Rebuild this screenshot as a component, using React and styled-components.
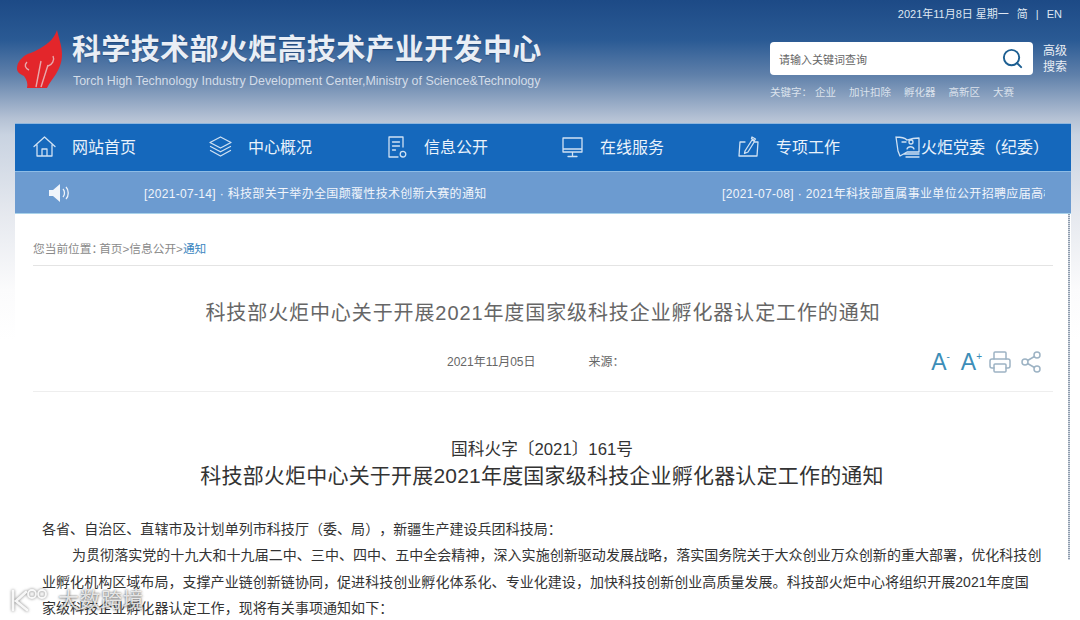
import React from 'react'
import styled, { createGlobalStyle } from 'styled-components'
import { Printer, Share2, Search } from 'lucide-react'

const Global = createGlobalStyle`
  html, body {
    margin: 0;
    padding: 0;
    background: #fff;
  }
  body {
    font-family: "Liberation Sans", "Noto Sans CJK SC", sans-serif;
    text-spacing-trim: space-all;
    overflow: hidden;
  }
`

const Page = styled.div`
  position: relative;
  width: 1080px;
  height: 620px;
  overflow: hidden;
  background: linear-gradient(180deg, #1d4a86 0, #2a5a94 40px, #5f80aa 75px, #b4c1d4 118px, #c9d3e1 135px, #e6e9ef 215px, #fbfbfc 290px, #fff 340px);
`

const Header = styled.header`
  height: 123px;
  display: flex;
  justify-content: space-between;
  padding: 0 11px 0 15px;
  box-sizing: border-box;
`

const Brand = styled.div`
  display: flex;
  align-items: flex-start;
  padding-top: 29px;
  gap: 10px;
`

const BrandText = styled.div`
  display: flex;
  flex-direction: column;
  padding-top: 4px;
`

const BrandName = styled.h1`
  margin: 0;
  font-size: 29px;
  line-height: 34px;
  font-weight: 700;
  letter-spacing: 0.35px;
  color: #e9eef5;
  white-space: nowrap;
  text-shadow: 0 1px 1px rgba(20, 50, 90, 0.45);
`

const BrandSub = styled.div`
  margin-top: 6px;
  padding-left: 1px;
  font-size: 12.4px;
  line-height: 16px;
  color: #d3dce8;
  white-space: nowrap;
`

const Tools = styled.div`
  width: 299px;
  display: flex;
  flex-direction: column;
`

const TopLine = styled.div`
  height: 30px;
  padding-top: 7px;
  box-sizing: border-box;
  display: flex;
  justify-content: flex-end;
  gap: 8px;
  font-size: 11px;
  line-height: 15px;
  color: #dfe7f2;
  margin-right: 7px;
  white-space: nowrap;
`

const SearchRow = styled.div`
  margin-top: 12px;
  display: flex;
  align-items: center;
  gap: 10px;
`

const SearchBox = styled.div`
  width: 264px;
  height: 33px;
  box-sizing: border-box;
  padding: 0 9px;
  background: #fff;
  border-radius: 4px;
  display: flex;
  align-items: center;
  justify-content: space-between;
  font-size: 11px;
  color: #666;
`

const SearchIcon = styled(Search)`
  color: #1d5f92;
`

const Advanced = styled.div`
  width: 26px;
  font-size: 12px;
  line-height: 16px;
  color: #e8edf4;
`

const Keywords = styled.div`
  margin-top: 9px;
  display: flex;
  font-size: 10.5px;
  line-height: 16px;
  color: #dbe2ec;
  gap: 13px;
`

const KeyLabel = styled.span`
  margin-right: -10px;
`

const Nav = styled.nav`
  margin: 0 9px 0 15px;
  height: 49px;
  box-sizing: border-box;
  background: #1568bc;
  border-top: 1px solid #8fb6dd;
  border-bottom: 1px solid #8dbce6;
  display: grid;
  grid-template-columns: repeat(6, 176px);
`

const NavItem = styled.a`
  display: flex;
  align-items: center;
  padding-left: ${({ $compact }) => ($compact ? '0' : '17px')};
  padding-bottom: 3px;
  gap: ${({ $compact }) => ($compact ? '1px' : '15px')};
  font-size: 16px;
  color: #eaf2fb;
  white-space: nowrap;
`

const NavIcon = styled.svg`
  width: 25px;
  height: 25px;
  flex: none;
  fill: none;
  stroke: #cfe1f3;
  stroke-width: 1.3;
  stroke-linecap: round;
  stroke-linejoin: round;
`

const Ticker = styled.div`
  margin: 0 9px 0 15px;
  height: 42px;
  box-sizing: border-box;
  background: #6c9bd0;
  border-bottom: 1px solid #a9d2ea;
  display: flex;
  align-items: center;
  padding-left: 33px;
  font-size: 12px;
  letter-spacing: 0.33px;
  color: #f1f5fb;
  white-space: nowrap;
`

const Speaker = styled.svg`
  width: 22px;
  height: 22px;
  flex: none;
  margin-right: 74px;
`

const TickerItem = styled.div`
  flex: 0 0 ${({ $width }) => $width}px;
  overflow: hidden;
`

const Panel = styled.main`
  position: relative;
  margin: 0 9px 0 15px;
  height: 406px;
  padding: 0 18px;
  box-sizing: border-box;
  background: #fff;
`

const ScrollEdge = styled.div`
  position: absolute;
  top: 0;
  right: 1px;
  width: 2px;
  height: 346px;
  background: repeating-linear-gradient(180deg, #8e9cae 0, #8e9cae 1px, #d5dbe3 1px, #d5dbe3 2px);
`

const Crumbs = styled.div`
  padding: 25px 0 6px;
  border-bottom: 1px solid #e4e4e4;
  font-size: 11.7px;
  line-height: 20px;
  color: #8a8a8a;
  display: flex;
`

const CrumbLabel = styled.span`
  margin-right: -4px;
`

const CrumbNow = styled.span`
  color: #3a86c0;
`

const TitleBlock = styled.section`
  padding: 32px 0 19px;
  border-bottom: 1px solid #eeeeee;
`

const Title = styled.h2`
  margin: 0;
  text-align: center;
  font-size: 20px;
  line-height: 30px;
  font-weight: 400;
  letter-spacing: 0.9px;
  color: #666;
`

const Meta = styled.div`
  margin-top: 20px;
  height: 24px;
  padding-left: 414px;
  display: flex;
  align-items: center;
  font-size: 12px;
  color: #666;
`

const MetaSource = styled.span`
  margin-left: 53px;
`

const MetaTools = styled.div`
  margin-left: auto;
  padding: 4px 10px 0 0;
  display: flex;
  align-items: center;
  color: #9db3c4;
`

const FontSize = styled.span`
  font-size: 23px;
  line-height: 24px;
  color: #3d8eb8;
  margin-right: ${({ $gap }) => $gap}px;

  sup {
    font-size: 10px;
    line-height: 10px;
    vertical-align: 10px;
  }
`

const ShareIcon = styled(Share2)`
  margin-left: 7px;
`

const Article = styled.article`
  padding: 45px 11px 0 9px;
  color: #333;
`

const DocNumber = styled.div`
  text-align: center;
  font-size: 16.7px;
  line-height: 26px;
`

const DocTitle = styled.h3`
  margin: 0 0 27px;
  text-align: center;
  font-size: 21px;
  line-height: 26px;
  letter-spacing: 0.2px;
  font-weight: 400;
`

const Para = styled.p`
  margin: 0;
  font-size: 14px;
  line-height: 26.3px;
  letter-spacing: 0.05px;
  text-indent: ${({ $indent }) => ($indent ? '30px' : '0')};
`

const Watermark = styled.div`
  position: absolute;
  left: 10px;
  bottom: 5px;
  display: flex;
  align-items: center;
  gap: 2px;
  font-size: 21px;
  line-height: 30px;
  letter-spacing: 0.5px;
  color: rgba(255, 255, 255, 0.8);
  text-shadow: 0 0 2px rgba(60, 60, 60, 0.75), 0 1px 3px rgba(60, 60, 60, 0.45);
`

const WatermarkLogo = styled.svg`
  width: 46px;
  height: 30px;
  fill: none;
  stroke: rgba(255, 255, 255, 0.9);
  stroke-width: 2.6;
  stroke-linecap: round;
  filter: drop-shadow(0 0 1.5px rgba(60, 60, 60, 0.75));
`

const navItems = [
  {
    label: '网站首页',
    icon: <path d="M2 12.5 12.5 3 23 12.5M5 11v11h15V11M10 22v-7h5v7" />,
  },
  {
    label: '中心概况',
    icon: <path d="M12.5 3 23 8.5l-10.5 5.5L2 8.5zM2.5 12.5l10 5.3 10-5.3M2.5 16.5l10 5.5 10-5.5" />,
  },
  {
    label: '信息公开',
    icon: <path d="M19 13V3H5v20h9M8.5 8h7M8.5 12h7M8.5 16h3M19 23a2.8 2.8 0 1 0 0-5.6 2.8 2.8 0 0 0 0 5.6z" />,
  },
  {
    label: '在线服务',
    icon: <path d="M3 4h19v14H3zM3 15h19M12.5 18v4M8 22.5h9" />,
  },
  {
    label: '专项工作',
    icon: <path d="M9 8H4L3 22h18l1-14h-3M9 17l7-11 2.5 1.5L12 18l-3.5 1.5zM16 3l3.5 2-1 1.5-3-2z" />,
  },
  {
    label: '火炬党委（纪委）',
    compact: true,
    icon: <path d="M1 3c5 0 9 1 11 3 3-1 7-2 12-2v14H12l-7 4-2-5zM1 3l2 14M7 8h4M14 8a2 2 0 1 0 4 0 2 2 0 1 0-4 0M12 15c1-3 6-3 7 0M9 20h15M11 23h13" />,
  },
]

const App = () => (
  <Page>
    <Global />
    <Header>
      <Brand>
        <svg width="47" height="60" viewBox="0 0 47 60">
          <path
            d="M42 1C44 10 47 17 47 25C47 34 44 40 41 45C38 50 34 54 32 59L12 59C13 55 12 51 9 47C5 45 2 43 2 40C2 34 5 31 8 28C12 24 18 24 22 21C30 17 39 11 42 1Z"
            fill="#e3262b"
          />
          <path
            d="M21 58 26 32M26 58 33 36M12 33C9 36 10 39 14 41M38 27C40 31 37 36 33 37"
            fill="none"
            stroke="#e8a9ac"
            strokeWidth="1.4"
          />
        </svg>
        <BrandText>
          <BrandName>科学技术部火炬高技术产业开发中心</BrandName>
          <BrandSub>Torch High Technology Industry Development Center,Ministry of Science&amp;Technology</BrandSub>
        </BrandText>
      </Brand>
      <Tools>
        <TopLine>
          <span>2021年11月8日 星期一</span>
          <span>简</span>
          <span>|</span>
          <span>EN</span>
        </TopLine>
        <SearchRow>
          <SearchBox>
            <span>请输入关键词查询</span>
            <SearchIcon size={23} strokeWidth={2} />
          </SearchBox>
          <Advanced>高级搜索</Advanced>
        </SearchRow>
        <Keywords>
          <KeyLabel>关键字：</KeyLabel>
          <span>企业</span>
          <span>加计扣除</span>
          <span>孵化器</span>
          <span>高新区</span>
          <span>大赛</span>
        </Keywords>
      </Tools>
    </Header>
    <Nav>
      {navItems.map((item) => (
        <NavItem key={item.label} $compact={item.compact}>
          <NavIcon viewBox="0 0 25 25">{item.icon}</NavIcon>
          {item.label}
        </NavItem>
      ))}
    </Nav>
    <Ticker>
      <Speaker viewBox="0 0 22 22">
        <path d="M1 8h4l7-6v18l-7-6H1z" fill="#f1f5fb" />
        <path d="M15 7c2 2 2 6 0 8M18 5c3 3 3 9 0 12" fill="none" stroke="#f1f5fb" strokeWidth="1.3" />
      </Speaker>
      <TickerItem $width={578}>[2021-07-14] · 科技部关于举办全国颠覆性技术创新大赛的通知</TickerItem>
      <TickerItem $width={323}>[2021-07-08] · 2021年科技部直属事业单位公开招聘应届高校毕业生</TickerItem>
    </Ticker>
    <Panel>
      <ScrollEdge />
      <Crumbs>
        <CrumbLabel>您当前位置：</CrumbLabel>
        <span>首页&gt;信息公开&gt;</span>
        <CrumbNow>通知</CrumbNow>
      </Crumbs>
      <TitleBlock>
        <Title>科技部火炬中心关于开展2021年度国家级科技企业孵化器认定工作的通知</Title>
        <Meta>
          <span>2021年11月05日</span>
          <MetaSource>来源：</MetaSource>
          <MetaTools>
            <FontSize $gap={11}>A<sup>-</sup></FontSize>
            <FontSize $gap={6}>A<sup>+</sup></FontSize>
            <Printer size={24} strokeWidth={1.5} />
            <ShareIcon size={24} strokeWidth={1.5} />
          </MetaTools>
        </Meta>
      </TitleBlock>
      <Article>
        <DocNumber>国科火字〔2021〕161号</DocNumber>
        <DocTitle>科技部火炬中心关于开展2021年度国家级科技企业孵化器认定工作的通知</DocTitle>
        <Para>各省、自治区、直辖市及计划单列市科技厅（委、局），新疆生产建设兵团科技局：</Para>
        <Para $indent>为贯彻落实党的十九大和十九届二中、三中、四中、五中全会精神，深入实施创新驱动发展战略，落实国务院关于大众创业万众创新的重大部署，优化科技创业孵化机构区域布局，支撑产业链创新链协同，促进科技创业孵化体系化、专业化建设，加快科技创新创业高质量发展。科技部火炬中心将组织开展2021年度国家级科技企业孵化器认定工作，现将有关事项通知如下：</Para>
      </Article>
    </Panel>
    <Watermark>
      <WatermarkLogo viewBox="0 0 46 30">
        <path d="M3 6v19M16 7 6 16l11 9" />
        <circle cx="22" cy="9" r="4" strokeWidth="1.8" />
        <circle cx="32" cy="9" r="4" strokeWidth="1.8" />
      </WatermarkLogo>
      大数跨境
    </Watermark>
  </Page>
)

export default App
